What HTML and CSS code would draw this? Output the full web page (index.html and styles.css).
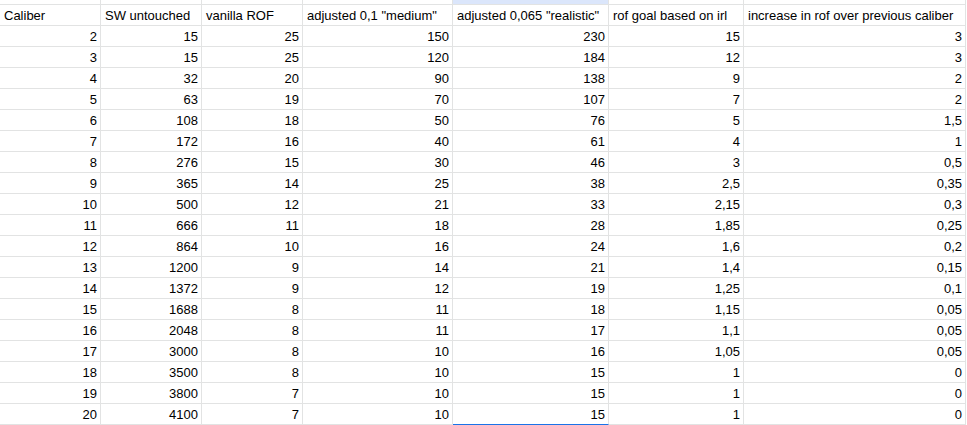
FILE: index.html
```html
<!DOCTYPE html>
<html>
<head>
<meta charset="utf-8">
<link rel="stylesheet" href="styles.css">
</head>
<body>
<div class="sheet">
  <div class="c top"></div><div class="c top"></div><div class="c top"></div><div class="c top"></div><div class="c top sel"></div><div class="c top"></div><div class="c top"></div>

  <div class="c">Caliber</div><div class="c">SW untouched</div><div class="c">vanilla ROF</div><div class="c">adjusted 0,1 "medium"</div><div class="c">adjusted 0,065 "realistic"</div><div class="c">rof goal based on irl</div><div class="c">increase in rof over previous caliber</div>

  <div class="c n">2</div><div class="c n">15</div><div class="c n">25</div><div class="c n">150</div><div class="c n">230</div><div class="c n">15</div><div class="c n">3</div>
  <div class="c n">3</div><div class="c n">15</div><div class="c n">25</div><div class="c n">120</div><div class="c n">184</div><div class="c n">12</div><div class="c n">3</div>
  <div class="c n">4</div><div class="c n">32</div><div class="c n">20</div><div class="c n">90</div><div class="c n">138</div><div class="c n">9</div><div class="c n">2</div>
  <div class="c n">5</div><div class="c n">63</div><div class="c n">19</div><div class="c n">70</div><div class="c n">107</div><div class="c n">7</div><div class="c n">2</div>
  <div class="c n">6</div><div class="c n">108</div><div class="c n">18</div><div class="c n">50</div><div class="c n">76</div><div class="c n">5</div><div class="c n">1,5</div>
  <div class="c n">7</div><div class="c n">172</div><div class="c n">16</div><div class="c n">40</div><div class="c n">61</div><div class="c n">4</div><div class="c n">1</div>
  <div class="c n">8</div><div class="c n">276</div><div class="c n">15</div><div class="c n">30</div><div class="c n">46</div><div class="c n">3</div><div class="c n">0,5</div>
  <div class="c n">9</div><div class="c n">365</div><div class="c n">14</div><div class="c n">25</div><div class="c n">38</div><div class="c n">2,5</div><div class="c n">0,35</div>
  <div class="c n">10</div><div class="c n">500</div><div class="c n">12</div><div class="c n">21</div><div class="c n">33</div><div class="c n">2,15</div><div class="c n">0,3</div>
  <div class="c n">11</div><div class="c n">666</div><div class="c n">11</div><div class="c n">18</div><div class="c n">28</div><div class="c n">1,85</div><div class="c n">0,25</div>
  <div class="c n">12</div><div class="c n">864</div><div class="c n">10</div><div class="c n">16</div><div class="c n">24</div><div class="c n">1,6</div><div class="c n">0,2</div>
  <div class="c n">13</div><div class="c n">1200</div><div class="c n">9</div><div class="c n">14</div><div class="c n">21</div><div class="c n">1,4</div><div class="c n">0,15</div>
  <div class="c n">14</div><div class="c n">1372</div><div class="c n">9</div><div class="c n">12</div><div class="c n">19</div><div class="c n">1,25</div><div class="c n">0,1</div>
  <div class="c n">15</div><div class="c n">1688</div><div class="c n">8</div><div class="c n">11</div><div class="c n">18</div><div class="c n">1,15</div><div class="c n">0,05</div>
  <div class="c n">16</div><div class="c n">2048</div><div class="c n">8</div><div class="c n">11</div><div class="c n">17</div><div class="c n">1,1</div><div class="c n">0,05</div>
  <div class="c n">17</div><div class="c n">3000</div><div class="c n">8</div><div class="c n">10</div><div class="c n">16</div><div class="c n">1,05</div><div class="c n">0,05</div>
  <div class="c n">18</div><div class="c n">3500</div><div class="c n">8</div><div class="c n">10</div><div class="c n">15</div><div class="c n">1</div><div class="c n">0</div>
  <div class="c n">19</div><div class="c n">3800</div><div class="c n">7</div><div class="c n">10</div><div class="c n">15</div><div class="c n">1</div><div class="c n">0</div>
  <div class="c n">20</div><div class="c n">4100</div><div class="c n">7</div><div class="c n">10</div><div class="c n sel-end">15</div><div class="c n">1</div><div class="c n">0</div>
</div>
</body>
</html>
```

FILE: styles.css
```css
html, body {
  margin: 0;
  padding: 0;
  background: #ffffff;
}

.sheet {
  display: grid;
  grid-template-columns: 101px 101px 101px 150px 156px 135px 222px;
  grid-auto-rows: 21px;
  width: 966px;
  font-family: "Liberation Sans", Arial, sans-serif;
  font-size: 13px;
  color: #000000;
}

.c {
  box-sizing: border-box;
  border-right: 1px solid #e2e3e3;
  border-bottom: 1px solid #e2e3e3;
  padding: 3px 3px 0 4px;
  line-height: 15px;
  white-space: nowrap;
  overflow: hidden;
}

.c.top {
  height: 5px;
  padding: 0;
}

.sheet > .c:nth-child(-n+7) {
  grid-row: 1;
  align-self: start;
}

.sheet {
  grid-template-rows: 5px;
}

.c.sel {
  background: #dbe6fb;
}

.c.n {
  text-align: right;
}

.c.sel-end {
  border-bottom-color: #1a73e8;
}
```
